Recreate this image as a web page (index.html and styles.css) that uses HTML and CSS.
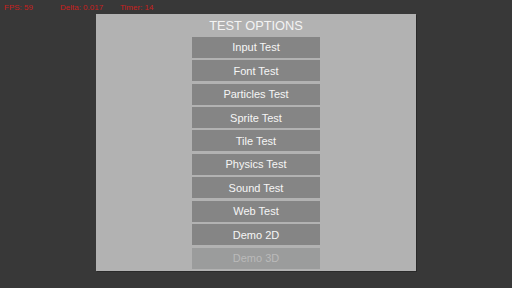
FILE: index.html
```html
<!DOCTYPE html>
<html>
<head>
<meta charset="utf-8">
<link rel="stylesheet" href="styles.css">
</head>
<body>
<div class="stats">
  <span class="stat fps">FPS: 59</span>
  <span class="stat delta">Delta: 0.017</span>
  <span class="stat timer">Timer: 14</span>
</div>
<div class="panel">
  <div class="title">TEST OPTIONS</div>
  <div class="menu">
    <div class="btn">Input Test</div>
    <div class="btn">Font Test</div>
    <div class="btn">Particles Test</div>
    <div class="btn">Sprite Test</div>
    <div class="btn">Tile Test</div>
    <div class="btn">Physics Test</div>
    <div class="btn">Sound Test</div>
    <div class="btn">Web Test</div>
    <div class="btn">Demo 2D</div>
    <div class="btn disabled">Demo 3D</div>
  </div>
</div>
</body>
</html>
```
FILE: styles.css
```css
html, body {
  margin: 0;
  padding: 0;
  width: 512px;
  height: 288px;
  background: #383838;
  overflow: hidden;
  font-family: "Liberation Sans", Arial, sans-serif;
}
.stats {
  display: flex;
  box-sizing: border-box;
  height: 14px;
  padding: 1.5px 0 0 4px;
  color: #c8201e;
  font-size: 8px;
  line-height: 12.5px;
}
.stat { display: block; }
.fps { width: 56px; }
.delta { width: 60px; }
.panel {
  margin-left: 96px;
  width: 320px;
  height: 257px;
  background: #b2b2b2;
  box-shadow: 1px 1px 0 #2a2a2a;
  display: flex;
  flex-direction: column;
  align-items: center;
}
.title {
  color: #f4f4f4;
  font-size: 12.8px;
  line-height: 14px;
  margin-top: 5px;
  height: 17.7px;
}
.menu {
  display: flex;
  flex-direction: column;
  gap: 2.45px;
}
.btn {
  box-sizing: border-box;
  width: 128px;
  height: 21px;
  padding-top: 1.5px;
  line-height: 19.5px;
  background: #858585;
  color: #f6f6f6;
  text-align: center;
  font-size: 11px;
}
.btn.disabled {
  background: #9b9c9c;
  color: #bababa;
}
```
